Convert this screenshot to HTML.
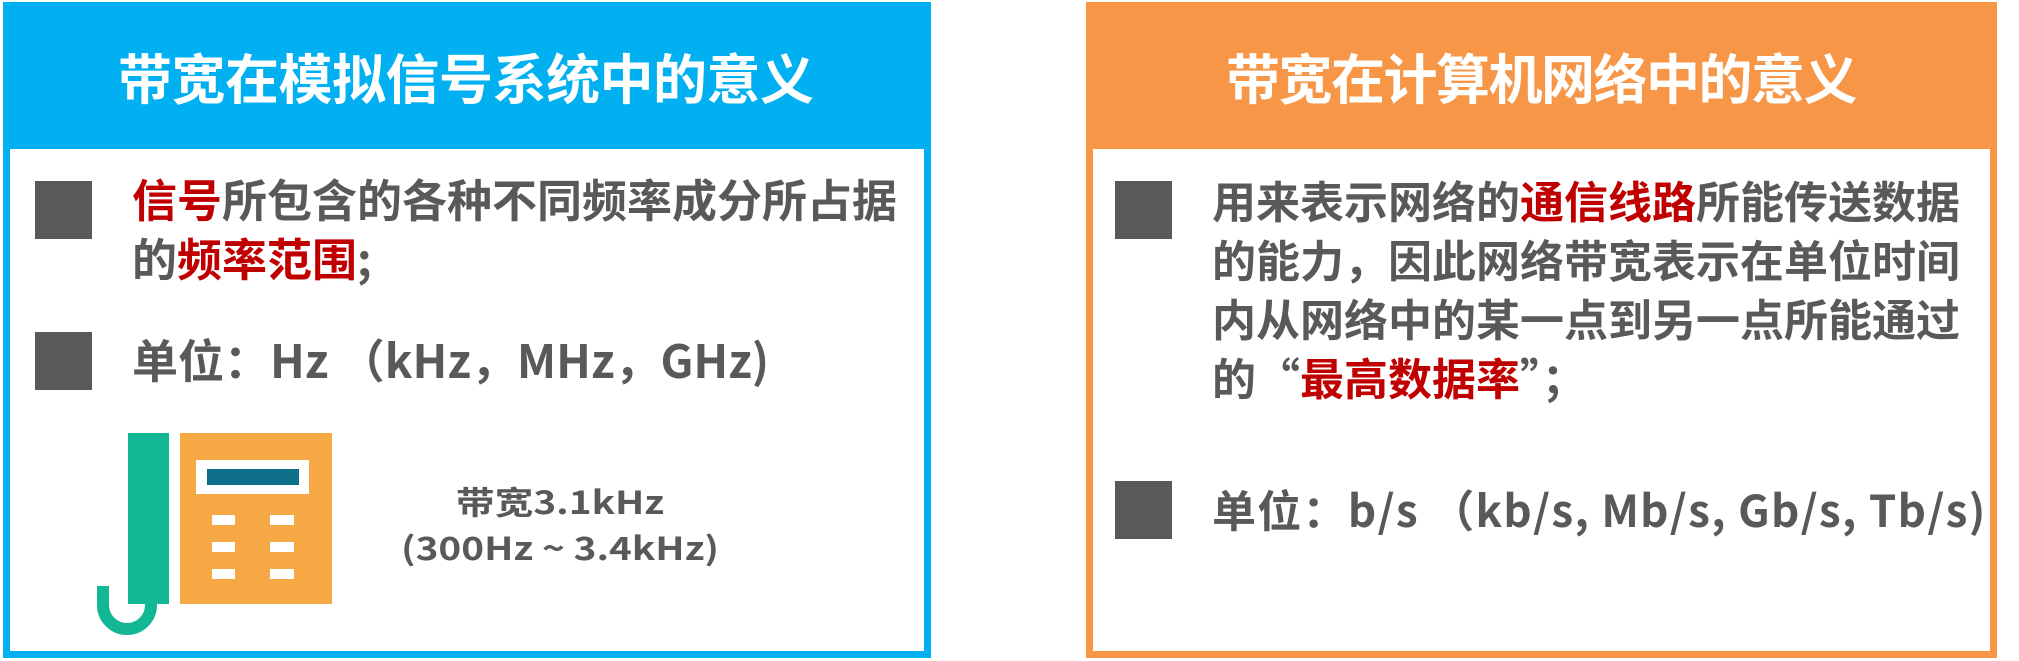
<!DOCTYPE html>
<html><head><meta charset="utf-8"><style>
*{margin:0;padding:0;box-sizing:border-box}
body{width:2019px;height:661px;background:#fff;position:relative;overflow:hidden;font-family:"Liberation Sans","Noto Sans CJK SC",sans-serif;font-weight:bold;color:#595959}
.abs{position:absolute;white-space:nowrap}
.panel{position:absolute;top:2px;height:656px;border:7px solid}
.hdr{position:absolute;left:0;top:0;right:0;height:140px}
.title{position:absolute;color:#fff;font-size:54px;line-height:60px;font-family:"Noto Sans CJK SC",sans-serif;font-weight:bold;white-space:nowrap}
.sq{position:absolute;background:#595959;width:57px;height:58px}
.t{position:absolute;white-space:nowrap;font-family:"Noto Sans CJK SC",sans-serif;font-weight:bold}
.r{color:#c00000}
</style></head><body>
<div class="panel" style="left:3px;width:928px;border-color:#00b0f0"><div class="hdr" style="background:#00b0f0"></div></div>
<div class="panel" style="left:1086px;width:911px;border-color:#f79646"><div class="hdr" style="background:#f79646"></div></div>

<div class="title" style="left:118px;top:46px;letter-spacing:-0.5px">带宽在模拟信号系统中的意义</div>
<div class="title" style="left:1226px;top:46px;letter-spacing:-1.5px">带宽在计算机网络中的意义</div>

<div class="sq" style="left:35px;top:181px"></div>
<div class="t" style="left:132px;top:168px;font-size:45px;line-height:59px"><span class="r">信号</span>所包含的各种不同频率成分所占据<br>的<span class="r">频率范围</span>;</div>
<div class="sq" style="left:35px;top:332px"></div>
<div class="t" style="left:132px;top:330px;font-size:46px;line-height:59px">单位：Hz （kHz，MHz，GHz)</div>

<svg class="abs" style="left:0;top:0" width="400" height="661">
<rect x="128" y="433" width="41" height="171" fill="#13b795"/>
<path d="M103 586 V605 A24 24 0 0 0 151 605 V600" fill="none" stroke="#13b795" stroke-width="12"/>
<rect x="180" y="433" width="152" height="171" fill="#f5a843"/>
<rect x="196" y="460" width="113" height="34" fill="#fff"/>
<rect x="207" y="469" width="92" height="16" fill="#0e6f8a"/>
<g fill="#fff">
<rect x="212" y="515" width="23" height="10"/><rect x="270" y="515" width="24" height="10"/>
<rect x="212" y="542" width="23" height="10"/><rect x="270" y="542" width="24" height="10"/>
<rect x="212" y="569" width="23" height="10"/><rect x="270" y="569" width="24" height="10"/>
</g></svg>
<div class="t" style="left:400px;top:478px;width:320px;text-align:center;font-size:32px;line-height:46px;transform:scaleX(1.21)">带宽3.1kHz<br>(300Hz ~ 3.4kHz)</div>

<div class="sq" style="left:1115px;top:181px"></div>
<div class="t" style="left:1212px;top:170px;font-size:44px;line-height:59px">用来表示网络的<span class="r">通信线路</span>所能传送数据<br>的能力，因此网络带宽表示在单位时间<br>内从网络中的某一点到另一点所能通过<br>的“<span class="r">最高数据率</span>”；</div>
<div class="sq" style="left:1115px;top:481px"></div>
<div class="t" style="left:1212px;top:479px;font-size:44px;line-height:59px;letter-spacing:1.3px">单位：b/s （kb/s, Mb/s, Gb/s, Tb/s)</div>
</body></html>
